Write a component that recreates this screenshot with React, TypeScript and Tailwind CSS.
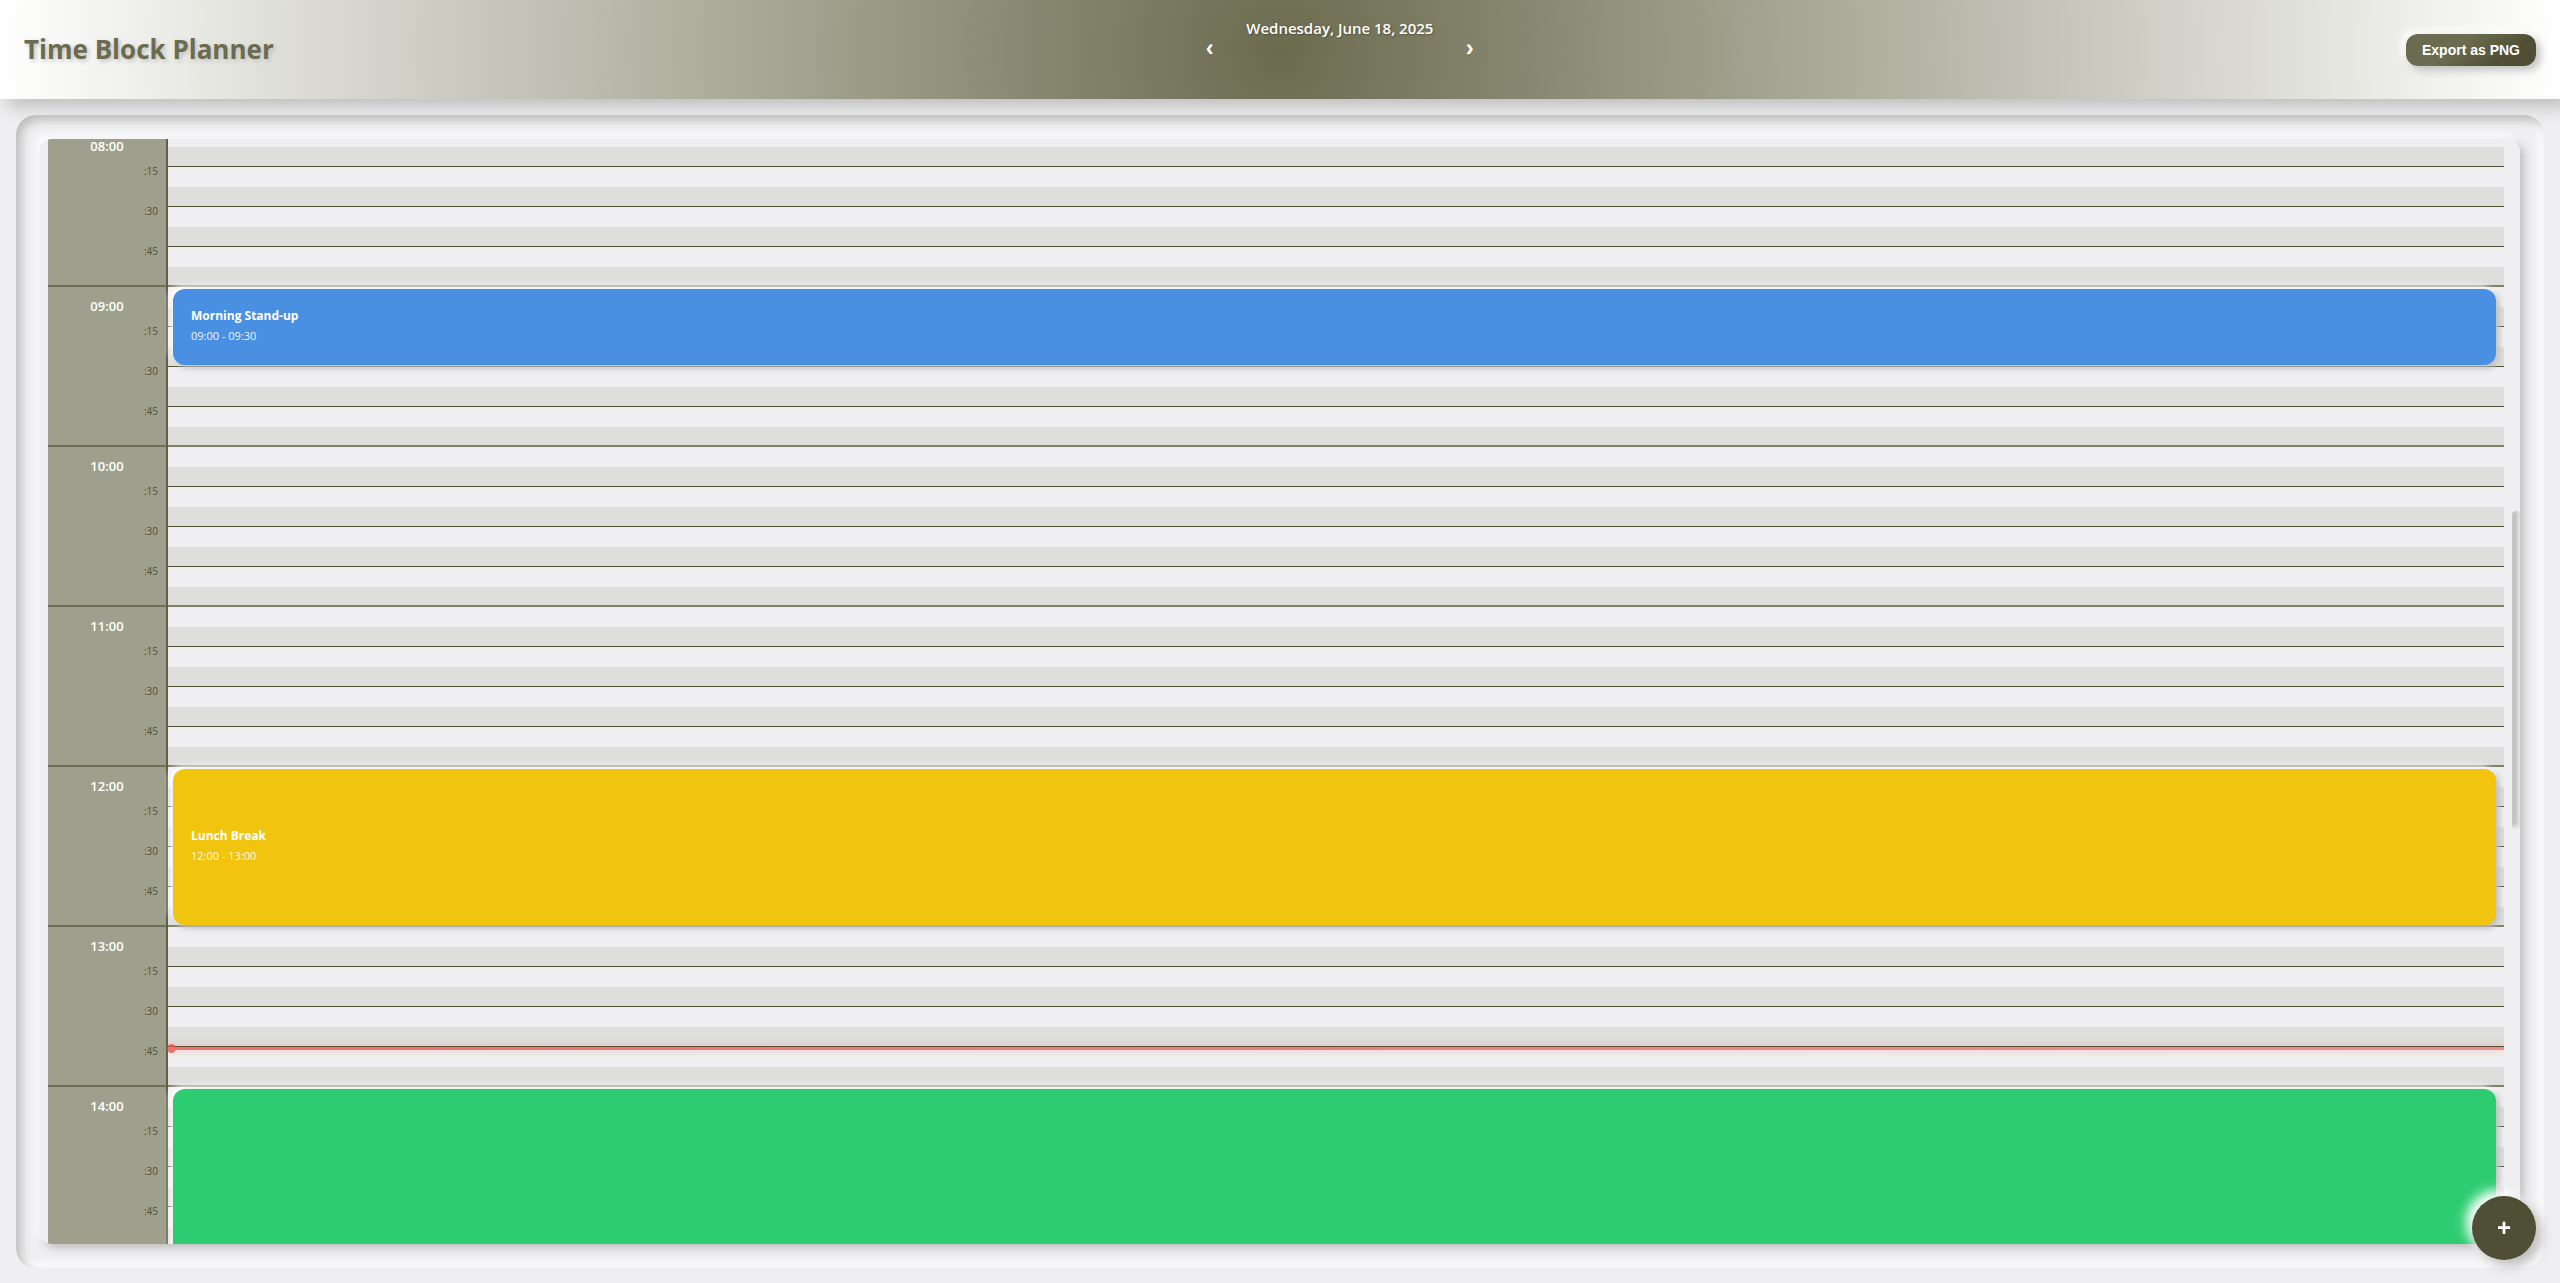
import { useLayoutEffect, useRef, useState } from "react";

const HOUR_HEIGHT = 160;
const DAY_HEIGHT = 24 * HOUR_HEIGHT;
const INITIAL_SCROLL = 1292;
const NOW_OFFSET = 2200;

const minutesToPx = (minutes: number) => (minutes * HOUR_HEIGHT) / 60;
const hourLabel = (h: number) => `${String(h).padStart(2, "0")}:00`;

type Block = { title?: string; time?: string; start: number; end: number; color: string };

const BLOCKS: Block[] = [
  { title: "Morning Stand-up", time: "09:00 - 09:30", start: 540, end: 570, color: "bg-[#4a90e2]" },
  { title: "Lunch Break", time: "12:00 - 13:00", start: 720, end: 780, color: "bg-[#f1c40f]" },
  { start: 840, end: 990, color: "bg-[#2ecc71]" },
];

function Header() {
  return (
    <header className="relative flex h-[99px] shrink-0 items-center justify-between bg-[radial-gradient(circle,#6b6b4f,#ffffff)] px-6 shadow-[8px_8px_16px_#bebebe,-8px_-8px_16px_#ffffff]">
      <h1 className="text-[26px] font-bold text-[#6b6b4f] [text-shadow:2px_2px_4px_#bebebe]">Time Block Planner</h1>
      <div className="flex h-full w-[284px] flex-col pt-4">
        <p className="text-center text-[15px] leading-6 font-semibold text-white [text-shadow:1px_1px_2px_rgba(0,0,0,0.3)]">
          Wednesday, June 18, 2025
        </p>
        <div className="flex items-center justify-between px-2 font-['Liberation_Sans',sans-serif] text-2xl leading-4 font-bold text-white">
          <button type="button" aria-label="Previous day">‹</button>
          <button type="button" aria-label="Next day">›</button>
        </div>
      </div>
      <button
        type="button"
        className="h-8 rounded-xl bg-[linear-gradient(145deg,#6b6b4f_40%,#4f4f35_75%)] px-4 font-['Liberation_Sans',sans-serif] text-sm font-bold text-white shadow-[4px_4px_8px_#bebebe,-4px_-4px_8px_#ffffff]"
      >
        Export as PNG
      </button>
    </header>
  );
}

function TimeColumn({ hours }: { hours: number[] }) {
  return (
    <div className="w-[120px] shrink-0 border-r-2 border-[#5f5f48] bg-[#9f9f8d]">
      {hours.map((h) => (
        <div key={h} className="flex h-40 flex-col border-b-2 border-[#6f6f58]">
          <span className="h-9 pt-[7px] text-center text-[13px] leading-6 font-semibold text-white">
            {hourLabel(h)}
          </span>
          {[":15", ":30", ":45"].map((q) => (
            <span key={q} className="h-10 pr-2 text-right text-[10px] leading-4 text-[#4f4f35]">
              {q}
            </span>
          ))}
        </div>
      ))}
    </div>
  );
}

function EventBlock({ block, origin }: { block: Block; origin: number }) {
  return (
    <button
      type="button"
      aria-label={block.title ?? "Time block"}
      className={`absolute right-2 left-[5px] flex flex-col justify-center rounded-xl px-[18px] pb-0.5 text-left text-white shadow-[3px_3px_6px_#bebebe,-3px_-3px_6px_#ffffff] ${block.color}`}
      style={{
        top: minutesToPx(block.start) + 2 - origin,
        height: minutesToPx(block.end - block.start) - 4,
      }}
    >
      {block.title && <span className="text-xs leading-5 font-bold">{block.title}</span>}
      {block.time && <span className="text-[11px] leading-5 opacity-90">{block.time}</span>}
    </button>
  );
}

function Grid({ hours }: { hours: number[] }) {
  const origin = hours[0] * HOUR_HEIGHT;
  return (
    <div className="relative flex-1">
      {hours.map((h) => (
        <div key={h} className="h-40 border-b-2 border-[#80806b]">
          {[0, 1, 2].map((q) => (
            <div key={q} className="h-10 border-b border-[#4f4f35] bg-[linear-gradient(#efeff1_20px,#dededd_20px)]" />
          ))}
          <div className="h-[38px] bg-[linear-gradient(#efeff1_20px,#dededd_20px)]" />
        </div>
      ))}
      {BLOCKS.filter((b) => hours.some((h) => b.start < (h + 1) * 60 && b.end > h * 60)).map((b) => (
        <EventBlock key={b.start} block={b} origin={origin} />
      ))}
      <div
        className="absolute right-0 left-0 h-[3px] bg-[linear-gradient(90deg,#e74c3c,#ec7063)] opacity-75 shadow-[0_0_8px_rgba(231,76,60,0.5)]"
        style={{ top: NOW_OFFSET - origin }}
      >
        <span className="absolute -top-[3px] -left-px size-[9px] rounded-full bg-[#e74c3c]" />
      </div>
    </div>
  );
}

function Timeline() {
  const scroller = useRef<HTMLDivElement>(null);
  const [view, setView] = useState({ top: INITIAL_SCROLL, height: 1104 });

  useLayoutEffect(() => {
    const el = scroller.current;
    if (!el) return;
    el.scrollTop = INITIAL_SCROLL;
    setView({ top: el.scrollTop, height: el.clientHeight });
  }, []);

  const first = Math.max(0, Math.floor(view.top / HOUR_HEIGHT));
  const last = Math.min(24, Math.ceil((view.top + view.height) / HOUR_HEIGHT));
  const hours = Array.from({ length: last - first }, (_, i) => first + i);

  return (
    <div className="relative flex min-h-0 flex-1 rounded-xl shadow-[4px_4px_8px_#bebebe,-4px_-4px_8px_#ffffff]">
      <div
        ref={scroller}
        onScroll={(e) => setView({ top: e.currentTarget.scrollTop, height: e.currentTarget.clientHeight })}
        className="flex-1 overflow-y-scroll rounded-xl bg-[#efeff1] pr-4 pl-2 [scrollbar-width:none]"
      >
        <div className="overflow-hidden" style={{ height: DAY_HEIGHT, paddingTop: first * HOUR_HEIGHT }}>
          <div className="flex">
            <TimeColumn hours={hours} />
            <Grid hours={hours} />
          </div>
        </div>
      </div>
      <div
        className="absolute right-0 w-2 rounded bg-[#c0c0c0] shadow-[inset_-2px_-2px_4px_#efeff1]"
        style={{
          top: `${(view.top / DAY_HEIGHT) * 100}%`,
          height: `${(view.height / DAY_HEIGHT) * 100}%`,
        }}
      />
    </div>
  );
}

export default function App() {
  return (
    <div className="flex h-screen flex-col bg-[#efeff1] font-['Segoe_UI','Open_Sans',sans-serif]">
      <Header />
      <main className="mx-4 mt-4 mb-[15px] flex min-h-0 flex-1 rounded-[20px] p-6 shadow-[inset_5px_5px_10px_#bebebe,inset_-5px_-5px_10px_#ffffff]">
        <Timeline />
      </main>
      <button
        type="button"
        aria-label="Add time block"
        className="fixed right-6 bottom-[23px] flex size-16 items-center justify-center rounded-full bg-[#4f4f35] font-['Liberation_Sans',sans-serif] text-2xl font-bold text-white shadow-[6px_6px_12px_#bebebe,-6px_-6px_12px_#ffffff]"
      >
        +
      </button>
    </div>
  );
}
